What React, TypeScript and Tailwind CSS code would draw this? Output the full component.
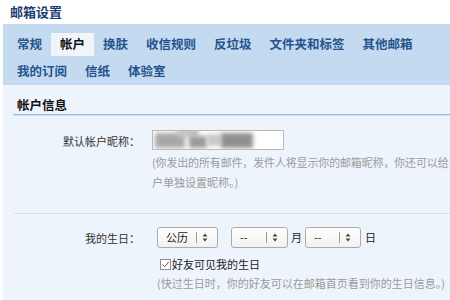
import React from "react";

const tabs = ["常规", "帐户", "换肤", "收信规则", "反垃圾", "文件夹和标签", "其他邮箱", "我的订阅", "信纸", "体验室"];

const Arrows: React.FC = () => (
	<svg width="6" height="9" viewBox="0 0 6 9" className="shrink-0">
		<path d="M3 0.5 L5.5 3.5 L0.5 3.5 Z" fill="#444" />
		<path d="M3 8.5 L5.5 5.5 L0.5 5.5 Z" fill="#444" />
	</svg>
);

interface SelectProps {
	value: string;
	width: string;
}

const FakeSelect: React.FC<SelectProps> = ({ value, width }) => (
	<div
		className={`${width} h-[21px] flex items-center rounded-[3px] border border-[#ababab] bg-gradient-to-b from-white to-[#f1f1f1] pl-[8px] pr-[9px] text-[11px] text-[#222]`}
	>
		<span className="flex-1">{value}</span>
		<span className="w-px h-[11px] bg-[#9a9a9a] mr-[5px]" />
		<Arrows />
	</div>
);

export default function App() {
	return (
		<div
			className="w-[450px] h-[300px] overflow-hidden bg-white pl-[3px]"
			style={{ fontFamily: '"Noto Sans CJK SC", "Noto Sans", sans-serif' }}
		>
			<div className="h-[24px] flex items-center pl-[7px] text-[13px] font-bold text-[#1d3f70]">
				邮箱设置
			</div>

			<div className="bg-[#c4daf0] h-[61px] pt-[9px] pl-[5px] flex flex-wrap content-start gap-y-[4px]">
				{tabs.map((t) => (
					<div
						key={t}
						className={`h-[23px] px-[9px] flex items-center text-[12.5px] font-bold ${
							t === "帐户" ? "bg-[#f1f5fa] text-[#111]" : "text-[#24548c]"
						}`}
					>
						{t}
					</div>
				))}
			</div>

			<div className="bg-[#eef4fb] h-[215px]">
				<div className="ml-[10px] pt-[11px]">
					<div className="h-[19px] border-b border-[#9fbcd8] pl-[4px] text-[12.5px] font-bold leading-[17px] text-[#111] shadow-[0_1px_0_#d4e2ef]">
						帐户信息
					</div>
				</div>

				<div className="grid grid-cols-[137px_1fr] mt-[15px]">
					<div className="h-[20px] flex items-center justify-end text-[11px] text-[#333] pt-[2px]">
						默认帐户昵称：
					</div>
					<div className="pl-[12px]">
						<div className="w-[132px] h-[20px] border border-[#b9b9b9] bg-white relative overflow-hidden">
							<div className="absolute left-[2px] top-[2px] w-[30px] h-[15px] bg-[#a8a8a8] blur-[2px]" />
							<div className="absolute left-[24px] top-[-3px] w-[22px] h-[9px] bg-[#c4c4c4] blur-[2px]" />
							<div className="absolute left-[36px] top-[5px] w-[18px] h-[12px] bg-[#9a9a9a] blur-[2px]" />
							<div className="absolute left-[54px] top-[3px] w-[14px] h-[12px] bg-[#c9c9c9] blur-[2px]" />
							<div className="absolute left-[68px] top-[2px] w-[32px] h-[15px] bg-[#8f8f8f] blur-[2px]" />
						</div>
						<div className="mt-[2px] text-[11px] leading-[20px] tracking-[-0.15px] text-[#9a9a9a] whitespace-nowrap">
							(你发出的所有邮件，发件人将显示你的邮箱昵称，你还可以给
						</div>
						<div className="text-[11px] leading-[20px] text-[#9a9a9a]">户单独设置昵称。)</div>
					</div>
				</div>

				<div className="ml-[11px] mt-[21px] border-t border-[#d6e0ea]" />

				<div className="grid grid-cols-[137px_1fr] mt-[13px]">
					<div className="h-[21px] flex items-center justify-end text-[11px] text-[#333] pt-[1px]">
						我的生日：
					</div>
					<div className="pl-[17px]">
						<div className="flex items-center text-[11px] text-[#222]">
							<FakeSelect value="公历" width="w-[61px]" />
							<div className="w-[13px]" />
							<FakeSelect value="--" width="w-[57px]" />
							<span className="mx-[3px]">月</span>
							<FakeSelect value="--" width="w-[56px]" />
							<span className="ml-[4px]">日</span>
						</div>
						<div className="mt-[6px] h-[20px] flex items-center pl-[3px] text-[11px] text-[#222]">
							<span className="w-[11px] h-[11px] border border-[#8e8e8e] bg-white flex items-center justify-center mr-[1px]">
								<svg width="9" height="9" viewBox="0 0 9 9">
									<path d="M1.5 4.5 L3.7 6.8 L7.8 1.8" stroke="#555" strokeWidth="1" fill="none" />
								</svg>
							</span>
							好友可见我的生日
						</div>
						<div className="text-[11px] leading-[18px] text-[#9a9a9a] whitespace-nowrap">
							(快过生日时，你的好友可以在邮箱首页看到你的生日信息。)
						</div>
					</div>
				</div>
			</div>
		</div>
	);
}
